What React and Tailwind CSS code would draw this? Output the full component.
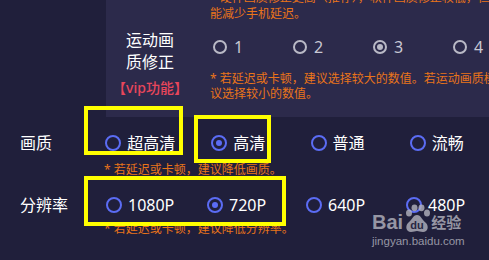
const font = "font-['Noto_Sans','Noto_Sans_CJK_SC',sans-serif]"

// Grey radio used inside the motion-correction panel.
function GreyRadio({ checked }) {
  return (
    <span className="flex h-[14px] w-[14px] items-center justify-center rounded-full border-2 border-[#b9b9c6]">
      {checked && <span className="h-[6px] w-[6px] rounded-full bg-[#b9b9c6]" />}
    </span>
  )
}

// Blue radio used for quality / resolution rows.
function BlueRadio({ checked }) {
  return (
    <span className="flex h-[16px] w-[16px] shrink-0 items-center justify-center rounded-full border-2 border-[#5b6cf4]">
      {checked && <span className="h-[6px] w-[6px] rounded-full bg-[#5b6cf4]" />}
    </span>
  )
}

function Option({ label, checked, width }) {
  return (
    <div className={`flex items-center gap-[6px] ${width}`}>
      <BlueRadio checked={checked} />
      <span className="text-[16px] leading-[22px] text-white">{label}</span>
    </div>
  )
}

function Paw() {
  return (
    <svg width="28" height="30" viewBox="0 0 28 30" className="-mb-[1px]">
      <ellipse cx="6" cy="9" rx="3" ry="3.6" fill="#b4b4bf" />
      <ellipse cx="11.5" cy="3.8" rx="3" ry="3.4" fill="#b4b4bf" />
      <ellipse cx="18.5" cy="3.8" rx="3" ry="3.4" fill="#b4b4bf" />
      <ellipse cx="24" cy="9" rx="3" ry="3.6" fill="#b4b4bf" />
      <path d="M14 11c-4 0-5 5-9 8-3 3-2 9 3 9 3 0 4-1 6-1s3 1 6 1c5 0 6-6 3-9-4-3-5-8-9-8z" fill="#b4b4bf" />
      <text x="14" y="25" textAnchor="middle" fontSize="11" fontWeight="700" fill="#2a2944" fontFamily="Liberation Sans, sans-serif">du</text>
    </svg>
  )
}

export default function App() {
  const motionOpts = ['1', '2', '3', '4']
  return (
    <div className={`relative h-[260px] w-[489px] overflow-hidden bg-[#201f3b] ${font}`}>
      {/* motion quality correction panel */}
      <div className="-mt-[10px] ml-[106px] flex h-[127px] w-[420px] bg-[#2c2a4b]">
        <div className="flex w-[88px] shrink-0 flex-col items-center pt-[39px]">
          <div className="text-center text-[16px] leading-[22px] text-white">
            运动画
            <br />
            质修正
          </div>
          <div className="mt-[5px] text-[14px] font-medium leading-[20px] whitespace-nowrap text-[#e8465b]">
            【vip功能】
          </div>
        </div>
        <div className="ml-[16px] flex-1">
          <p className="text-[12px] leading-[16px] whitespace-nowrap text-[#e9741a]">
            * 硬件画质修正更高（推荐），软件画质修正较低，但
            <br />
            能减少手机延迟。
          </p>
          <div className="mt-[15px] flex h-[20px] items-center">
            {motionOpts.map((o) => (
              <div key={o} className="flex w-[80px] items-center gap-[7px] pl-[3px]">
                <GreyRadio checked={o === '3'} />
                <span className="text-[16px] leading-[20px] text-[#c8c8d4]">{o}</span>
              </div>
            ))}
          </div>
          <p className="mt-[14px] text-[12px] leading-[15px] whitespace-nowrap text-[#e9741a]">
            * 若延迟或卡顿，建议选择较大的数值。若运动画质模糊，建
            <br />
            议选择较小的数值。
          </p>
        </div>
      </div>

      {/* quality + resolution */}
      <div className="pl-[20px]">
        <div className="mt-[15px] flex h-[22px] items-center">
          <span className="w-[86px] text-[16px] leading-[22px] text-white">画质</span>
          <Option label="超高清" width="w-[107px]" />
          <Option label="高清" checked width="w-[100px]" />
          <Option label="普通" width="w-[100px]" />
          <Option label="流畅" width="w-[80px]" />
        </div>
        <p className="mt-[8px] ml-[84px] text-[12px] leading-[16px] text-[#e9741a]">
          * 若延迟或卡顿，建议降低画质。
        </p>
        <div className="mt-[16px] flex h-[22px] items-center">
          <span className="w-[86px] text-[16px] leading-[22px] text-white">分辨率</span>
          <Option label="1080P" width="w-[101px]" />
          <Option label="720P" checked width="w-[99px]" />
          <Option label="640P" width="w-[100px]" />
          <Option label="480P" width="w-[80px]" />
        </div>
        <p className="mt-[5px] ml-[84px] text-[12px] leading-[16px] text-[#e9741a]">
          * 若延迟或卡顿，建议降低分辨率。
        </p>
      </div>

      {/* annotation boxes */}
      <div className="absolute left-[84px] top-[106px] h-[49px] w-[99px] border-4 border-[#ffff00]" />
      <div className="absolute left-[194px] top-[115px] h-[48px] w-[77px] border-4 border-[#ffff00]" />
      <div className="absolute left-[84px] top-[176px] h-[50px] w-[202px] border-4 border-[#ffff00]" />

      {/* watermark */}
      <div className="absolute left-[372px] top-[204px] flex flex-col items-start opacity-80">
        <div className="flex items-end">
          <span className="font-['Liberation_Sans',sans-serif] text-[20px] font-bold leading-[22px] text-[#b4b4bf]">
            Bai
          </span>
          <Paw />
          <span className="font-['Noto_Sans_CJK_SC',sans-serif] text-[15px] font-bold leading-[22px] text-[#b4b4bf]">
            经验
          </span>
        </div>
        <span className="mt-[2px] font-['Liberation_Sans',sans-serif] text-[11.5px] leading-[13px] text-[#b4b4bf]">
          jingyan.baidu.com
        </span>
      </div>
    </div>
  )
}
